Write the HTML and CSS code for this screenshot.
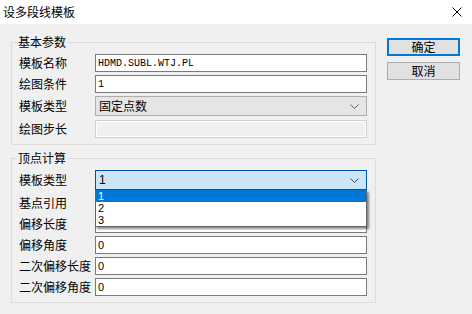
FILE: index.html
```html
<!DOCTYPE html>
<html lang="zh">
<head>
  <meta charset="UTF-8">
  <title>设多段线模板</title>
  <link rel="stylesheet" href="styles.css">
</head>
<body>
  <div class="titlebar">
    <span class="title">设多段线模板</span>
    <svg class="close" viewBox="0 0 10 10" width="10" height="10">
      <path d="M0.5 0.5 L9.5 9.5 M9.5 0.5 L0.5 9.5" stroke="#000" stroke-width="1" fill="none"/>
    </svg>
  </div>

  <div class="dialog">
    <div class="groups">
      <fieldset class="group">
        <legend>基本参数</legend>
        <div class="row">
          <label>模板名称</label>
          <input class="edit serif" type="text" value="HDMD.SUBL.WTJ.PL">
        </div>
        <div class="row">
          <label>绘图条件</label>
          <input class="edit serif" type="text" value="1">
        </div>
        <div class="row combo-row">
          <label>模板类型</label>
          <div class="combo">
            <span>固定点数</span>
            <svg class="chevron" viewBox="0 0 9 5" width="9" height="5"><path d="M0.5 0.5 L4.5 4.5 L8.5 0.5" stroke="#606060" fill="none"/></svg>
          </div>
        </div>
        <div class="row">
          <label>绘图步长</label>
          <input class="edit disabled" type="text" value="" disabled>
        </div>
      </fieldset>

      <fieldset class="group second">
        <legend>顶点计算</legend>
        <div class="row combo-row">
          <label>模板类型</label>
          <div class="combo focused">
            <span class="num">1</span>
            <svg class="chevron" viewBox="0 0 9 5" width="9" height="5"><path d="M0.5 0.5 L4.5 4.5 L8.5 0.5" stroke="#404a55" fill="none"/></svg>
            <!-- open dropdown list -->
            <ul class="droplist">
              <li class="selected">1</li>
              <li>2</li>
              <li>3</li>
            </ul>
          </div>
        </div>
        <div class="row">
          <label>基点引用</label>
          <input class="edit" type="text" value="">
        </div>
        <div class="row">
          <label>偏移长度</label>
          <input class="edit" type="text" value="">
        </div>
        <div class="row">
          <label>偏移角度</label>
          <input class="edit" type="text" value="0">
        </div>
        <div class="row">
          <label>二次偏移长度</label>
          <input class="edit" type="text" value="0">
        </div>
        <div class="row">
          <label>二次偏移角度</label>
          <input class="edit" type="text" value="0">
        </div>
      </fieldset>
    </div>

    <div class="buttons">
      <button class="btn default">确定</button>
      <button class="btn">取消</button>
    </div>
  </div>
</body>
</html>
```

FILE: styles.css
```css
* {
  box-sizing: border-box;
}

body {
  margin: 0;
  width: 472px;
  height: 314px;
  overflow: hidden;
  background-color: #f0f0f0;
  font-family: "Noto Sans CJK SC", "Microsoft YaHei", sans-serif;
  font-size: 12px;
  color: #000;
}

.titlebar {
  height: 24px;
  background-color: #fff;
  display: flex;
  align-items: center;
  justify-content: space-between;
  padding: 0 10px 0 3px;
}

.title {
  line-height: 16px;
}

.close {
  display: block;
  margin-top: -1px;
}

.dialog {
  display: flex;
  padding: 10px 0 0 11px;
}

.group {
  margin: 0;
  width: 365px;
  padding: 4px 8px 6px 7px;
  border: 1px solid #dcdcdc;
}

.group.second {
  margin-top: 5px;
  padding-top: 3px;
}

.group legend {
  padding: 0 2px;
  margin-left: -3px;
  line-height: 16px;
}

.row {
  display: flex;
  align-items: center;
  height: 18px;
  margin-bottom: 3px;
}

.row:last-child {
  margin-bottom: 0;
}

.row.combo-row {
  height: 20px;
  margin-top: 1px;
  margin-bottom: 4px;
}

.row label {
  width: 76px;
  flex-shrink: 0;
  line-height: 16px;
  white-space: nowrap;
}

.edit {
  flex: 1;
  height: 18px;
  margin: 0;
  padding: 0 2px;
  border: 1px solid #7a7a7a;
  background-color: #fff;
  font-family: "Liberation Sans", sans-serif;
  font-size: 11px;
  color: #000;
  outline: none;
}

.edit.serif {
  font-family: "Liberation Mono", monospace;
  font-size: 10px;
}

.edit.disabled {
  background-color: #f0f0f0;
  border-color: #cfcfcf;
  box-shadow: inset 0 0 0 1px #fff;
}

.combo {
  position: relative;
  flex: 1;
  height: 20px;
  display: flex;
  align-items: center;
  justify-content: space-between;
  padding: 0 7px 0 3px;
  background-color: #e5e5e5;
  border: 1px solid #adadad;
  line-height: 16px;
}

.combo.focused {
  background-color: #cce4f7;
  border-color: #005499;
}

.combo .num {
  font-family: "Liberation Sans", sans-serif;
  font-size: 12px;
}

.chevron {
  display: block;
}

.droplist {
  position: absolute;
  top: 19px;
  left: -1px;
  right: -1px;
  margin: 0;
  padding: 0;
  list-style: none;
  background-color: #fff;
  border: 1px solid #646464;
  border-top: none;
  box-shadow: 2px 2px 2px rgba(0, 0, 0, 0.45);
}

.droplist li {
  height: 12px;
  line-height: 12px;
  padding-left: 2px;
  font-family: "Liberation Sans", sans-serif;
  font-size: 11px;
}

.droplist li.selected {
  background-color: #0078d7;
  color: #fff;
}

.buttons {
  display: flex;
  flex-direction: column;
  gap: 6px;
  margin: 4px 0 0 11px;
}

.btn {
  width: 73px;
  height: 18px;
  padding: 0;
  background-color: #e1e1e1;
  border: 1px solid #adadad;
  font-family: "Noto Sans CJK SC", sans-serif;
  font-size: 12px;
  line-height: 14px;
  color: #000;
}

.btn.default {
  border: 2px solid #0078d7;
}
```
